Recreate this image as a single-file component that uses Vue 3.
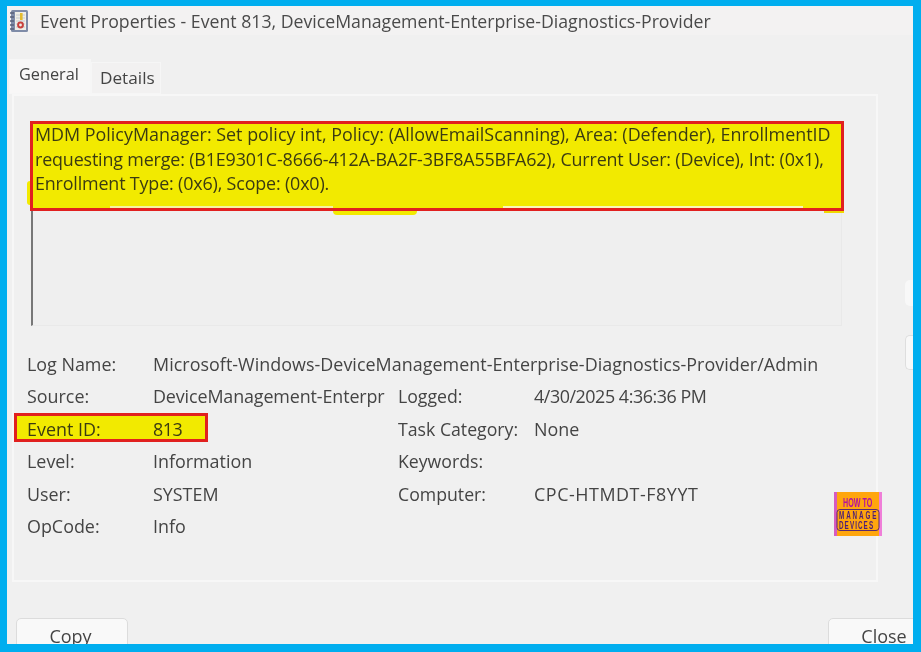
<script setup>
const rows = [
  { label: 'Source:', value: 'DeviceManagement-Enterpr', cls: 'snug', label2: 'Logged:', value2: '4/30/2025 4:36:36 PM', cls2: 'narrow' },
  { label: 'Event ID:', value: '813', cls: 'narrow', label2: 'Task Category:', value2: 'None', mark: true },
  { label: 'Level:', value: 'Information', label2: 'Keywords:', value2: '' },
  { label: 'User:', value: 'SYSTEM', label2: 'Computer:', value2: 'CPC-HTMDT-F8YYT', cls2: 'wide' },
  { label: 'OpCode:', value: 'Info', label2: '', value2: '' }
]
const lines = [
  'MDM PolicyManager: Set policy int, Policy: (AllowEmailScanning), Area: (Defender), EnrollmentID',
  'requesting merge: (B1E9301C-8666-412A-BA2F-3BF8A55BFA62), Current User: (Device), Int: (0x1),',
  'Enrollment Type: (0x6), Scope: (0x0).'
]
</script>

<template>
  <div class="frame">
    <div class="window">
      <header class="titlebar">
        <svg class="app-icon" width="20" height="24" viewBox="0 0 20 24">
          <rect x="2" y="1" width="17" height="22" rx="1.5" fill="#7f8ca8" />
          <rect x="6" y="3" width="11" height="18" fill="#efeee6" />
          <path d="M7 6h9M7 9h9M7 12h9M7 15h9M7 18h9" stroke="#b9bfcc" stroke-width="0.8" />
          <path d="M1 4h4M1 8h4M1 12h4M1 16h4M1 20h4" stroke="#59627a" stroke-width="1.6" />
          <rect x="11" y="4" width="2.6" height="7" fill="#e3bb2e" />
          <circle cx="11.5" cy="16" r="3.4" fill="#c8413c" />
          <circle cx="11.5" cy="16" r="1.4" fill="#efeee6" />
        </svg>
        <span class="title">Event Properties - Event 813, DeviceManagement-Enterprise-Diagnostics-Provider</span>
      </header>

      <nav class="tabs">
        <span class="tab active">General</span>
        <span class="tab">Details</span>
      </nav>

      <section class="panel">
        <div class="message">
          <div class="highlight">
            <i class="spill spill-left"></i>
            <i class="spill spill-bottom"></i>
            <i class="spill spill-right"></i>
            <i class="gap gap-soft"></i>
            <i class="gap gap-strong"></i>
            <div v-for="l in lines" :key="l" class="line">{{ l }}</div>
          </div>
        </div>

        <div class="details">
          <div class="row log-name">
            <span class="label">Log Name:</span>
            <span class="value">Microsoft-Windows-DeviceManagement-Enterprise-Diagnostics-Provider/Admin</span>
          </div>
          <div v-for="r in rows" :key="r.label" class="row">
            <span class="first" :class="{ marked: r.mark }">
              <span class="label">{{ r.label }}</span>
              <span class="value" :class="r.cls">{{ r.value }}</span>
            </span>
            <span class="label second">{{ r.label2 }}</span>
            <span class="value" :class="r.cls2">{{ r.value2 }}</span>
          </div>
        </div>

        <svg class="logo" width="48" height="44" viewBox="0 0 48 44">
          <rect width="48" height="44" fill="#ffa60d" />
          <rect width="3" height="44" fill="#d65cc0" />
          <rect x="45" width="3" height="44" fill="#ef7ed8" />
          <text transform="translate(9 15) scale(0.55 1)" class="logo-top">HOW TO</text>
          <rect x="3" y="17.5" width="42" height="21" rx="3" fill="none" stroke="#5b2a6e" stroke-width="1" />
          <text transform="translate(5 27) scale(0.6 1)" class="logo-low manage">MANAGE</text>
          <text transform="translate(5 36.5) scale(0.6 1)" class="logo-low devices">DEVICES</text>
        </svg>
      </section>

      <footer class="buttons">
        <span class="btn copy">Copy</span>
        <span class="btn">Close</span>
      </footer>

      <aside class="edge">
        <span class="nub"></span>
        <span class="nub tall"></span>
      </aside>
    </div>
  </div>
</template>

<style>
html, body { margin: 0; background: #00aeef; }
</style>

<style scoped>
.frame {
  width: 921px;
  height: 652px;
  box-sizing: border-box;
  padding: 6px 8px 8px 7px;
  background: #00aeef;
  font-family: "Open Sans", "Noto Sans", sans-serif;
  color: #444;
  overflow: hidden;
}
.window {
  position: relative;
  height: 100%;
  background: #f0f0f0;
  overflow: hidden;
  display: flex;
  flex-direction: column;
  filter: blur(0.35px);
}
.titlebar {
  height: 29px;
  flex: none;
  padding-left: 2px;
  display: flex;
  align-items: center;
  gap: 11px;
  background: #f3f2f2;
}
.title { font-size: 17.7px; color: #4a4a4a; white-space: nowrap; }
.tabs {
  margin-top: 24px;
  padding-left: 2px;
  height: 35px;
  flex: none;
  display: flex;
  align-items: flex-end;
}
.tab {
  height: 32px;
  padding: 0 6px 0 9px;
  line-height: 31px;
  font-size: 17.2px;
  background: #f2f1f1;
  box-shadow: inset 0 0 0 1px #f6f6f6;
}
.tab.active { height: 35px; width: 82px; box-sizing: border-box; padding: 0 0 0 10px; line-height: 31px; font-size: 16.3px; background: #f8f7f7; }
.panel {
  position: relative;
  width: 866px;
  height: 488px;
  flex: none;
  box-sizing: border-box;
  margin-left: 5px;
  padding: 26px 0 0 17px;
  border: 2px solid #f7f7f7;
}
.message {
  width: 811px;
  height: 204px;
  box-sizing: border-box;
  border: 1px solid #e9e9e9;
  border-left: 2px solid #777;
  background: #efefef;
}
.highlight {
  position: relative;
  width: 814px;
  height: 90px;
  box-sizing: border-box;
  margin: -2px 0 0 -3px;
  padding: 0 0 0 2px;
  border: 3px solid #e1201f;
  background: #f2ea00;
  color: #3b3b12;
  font-size: 17.9px;
  line-height: 24.5px;
  white-space: nowrap;
}
.line:first-of-type { margin-top: -2px; }
.line:nth-of-type(n+2) { letter-spacing: -0.16px; }
.spill { position: absolute; background: #f2ea00; }
.spill-left { left: -6px; top: 57px; width: 3px; height: 24px; border-radius: 3px 0 0 3px; }
.spill-bottom { left: 300px; bottom: -7px; width: 84px; height: 4px; border-radius: 0 0 40px 40px; }
.spill-right { right: -3px; bottom: -5px; width: 20px; height: 2px; background: #f0d800; }
.gap { position: absolute; bottom: 0; }
.gap-soft { left: 77px; width: 223px; height: 2px; background: #f6f3a0; }
.gap-strong { left: 470px; width: 300px; height: 2px; background: #f9f7b8; }
.details {
  margin: 22px 0 0 -4px;
  font-size: 17.9px;
}
.row {
  height: 32.4px;
  line-height: 32.4px;
  display: flex;
  white-space: nowrap;
}
.log-name .value { letter-spacing: 0.04px; }
.first {
  position: relative;
  width: 371px;
  display: flex;
  flex: none;
}
.first .value { width: 232px; }
.label { width: 126px; flex: none; }
.second { width: 136px; font-size: 17.7px; }
.snug { letter-spacing: -0.12px; }
.narrow { letter-spacing: -0.45px; }
.wide { letter-spacing: 0.55px; }
.marked::before {
  content: "";
  position: absolute;
  z-index: -1;
  left: -13px;
  top: 0;
  width: 194px;
  height: 29px;
  box-sizing: border-box;
  border: 3px solid #e1201f;
  background: #f2ea00;
}
.marked { z-index: 0; color: #3b3b12; }
.logo { position: absolute; left: 820px; top: 396px; }
.logo-top { font: 700 13px "Liberation Sans", sans-serif; fill: #b3119f; }
.logo-low { font: 700 10.5px "Liberation Sans", sans-serif; fill: #4b1d78; }
.manage { letter-spacing: 3.2px; }
.devices { letter-spacing: 1.8px; }
.buttons {
  margin-top: 36px;
  width: 933px;
  box-sizing: border-box;
  padding-left: 9px;
  display: flex;
  justify-content: space-between;
  flex: none;
}
.btn {
  height: 40px;
  box-sizing: border-box;
  width: 112px;
  text-align: center;
  line-height: 34px;
  font-size: 18px;
  background: #f9f9f9;
  border: 1px solid #dcdcdc;
  border-radius: 5px;
}
.copy { padding-right: 3px; }
.edge {
  position: absolute;
  right: 0;
  top: 274px;
  display: flex;
  flex-direction: column;
  gap: 29px;
  width: 8px;
}
.nub { height: 26px; background: #f8f8f8; border-radius: 5px 0 0 5px; }
.nub.tall { height: 33px; border: 1px solid #dedede; border-right: 0; }
</style>
